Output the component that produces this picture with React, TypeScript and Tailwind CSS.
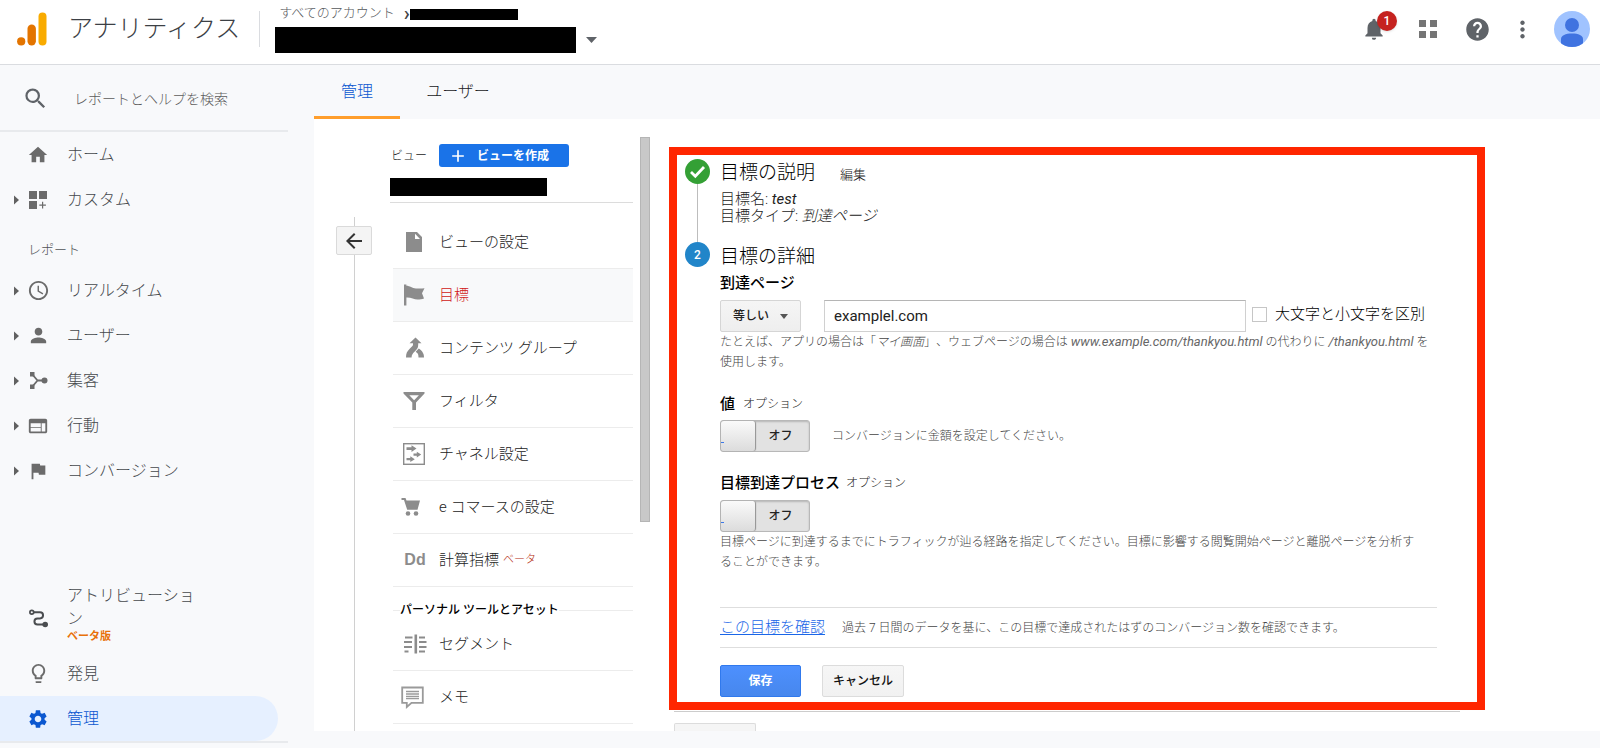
import React, { useState } from "react";
import {
  MdNotifications,
  MdHelp,
  MdMoreVert,
  MdSearch,
  MdHome,
  MdAccessTime,
  MdPerson,
  MdWeb,
  MdFlag,
  MdLightbulbOutline,
  MdSettings,
  MdArrowBack,
  MdAdd,
} from "react-icons/md";

const AnalyticsLogo = () => (
  <svg className="h-[34px] w-[30px] shrink-0" viewBox="0 0 30 34" aria-hidden="true">
    <rect x="21.5" y="0.5" width="8" height="33" rx="4" fill="#f9ab00" />
    <rect x="10.5" y="12.5" width="8.4" height="21" rx="4.2" fill="#e37400" />
    <circle cx="4.2" cy="29.4" r="4.1" fill="#e37400" />
  </svg>
);

const AppsIcon = () => (
  <svg className="size-[18px]" viewBox="0 0 18 18" fill="#757575" aria-hidden="true">
    <path d="M0 0h7v7H0zM11 0h7v7h-7zM0 11h7v7H0zM11 11h7v7h-7z" />
  </svg>
);

const Avatar = () => (
  <svg className="size-9" viewBox="0 0 36 36" aria-hidden="true">
    <clipPath id="avatar-clip">
      <circle cx="18" cy="18" r="18" />
    </clipPath>
    <circle cx="18" cy="18" r="18" fill="#a0c3ff" />
    <g clipPath="url(#avatar-clip)" fill="#4073e0">
      <circle cx="18" cy="14" r="7" />
      <path d="M7 36V28c0-3.500 4.500-5.500 11-5.500S29 24.500 29 28v8z" />
    </g>
  </svg>
);

const CheckIcon = () => (
  <svg className="size-[17px]" viewBox="0 0 17 17" fill="none" aria-hidden="true">
    <path d="M2 9l4.300 4.200L15 4" stroke="#fff" strokeWidth="2.800" />
  </svg>
);

const CustomIcon = () => (
  <svg className="size-[18px]" viewBox="0 0 18 18" fill="currentColor" aria-hidden="true">
    <path d="M0 0h8v8H0zM10 0h8v8h-8zM0 10h8v8H0zM13 10.800h1.200v2.700h2.700v1.200h-2.700v2.700H13v-2.700h-2.700v-1.200H13z" />
  </svg>
);

const AcquisitionIcon = () => (
  <svg className="size-[19px]" viewBox="0 0 19 19" aria-hidden="true">
    <path d="M3 3l5.500 6.500L3 16M8.500 9.500H15" fill="none" stroke="currentColor" strokeWidth="1.800" />
    <path d="M1 1h4.500v4.500H1zM1 13.500h4.500V18H1z" fill="currentColor" />
    <circle cx="15.500" cy="9.500" r="3" fill="currentColor" />
  </svg>
);

const AttributionIcon = () => (
  <svg className="size-[19px]" viewBox="0 0 19 19" aria-hidden="true">
    <circle cx="2.800" cy="3.300" r="1.900" fill="none" stroke="currentColor" strokeWidth="1.700" />
    <path
      d="M4.700 3.300H11a3 3 0 0 1 0 6.100H8.500a3 3 0 0 0 0 6.100H16"
      fill="none"
      stroke="currentColor"
      strokeWidth="2"
    />
    <circle cx="16.200" cy="15.500" r="2.800" fill="currentColor" />
  </svg>
);

const FileIcon = () => (
  <svg className="size-[22px]" viewBox="0 0 22 22" fill="#8c8c8c" aria-hidden="true">
    <path fillRule="evenodd" d="M3 1h11l5 5v15H3zM12 2.800V8h5z" />
  </svg>
);

const GoalIcon = () => (
  <svg className="size-[22px]" viewBox="0 0 22 22" fill="#8c8c8c" aria-hidden="true">
    <path d="M1 0.500h2.400v1.300C7 1.800 9 4.500 13 4.500c3 0 5 0 8.500-.3l-2.500 5 2 5.300c-2 .7-4 1-6.500 1-3.500 0-6.500-2.300-11.100-2V21.500H1z" />
  </svg>
);

const MergeIcon = () => (
  <svg className="size-[22px]" viewBox="0 0 22 22" fill="#8c8c8c" aria-hidden="true">
    <path d="M12.500 0.500l6 5.800h-3.300v1.700c0 3.400-1.600 4.600-3.700 6.700-1.900 1.900-2.900 3.300-2.900 5.800H3c0-4 1-6.200 3.700-8.800C9 9.600 10 8.800 10 7.500V6.300H6.500z" />
    <path d="M15.800 11.500c3.900 3 5.200 5 5.200 9h-5.500c0-3-.3-4-2.800-5.800z" />
  </svg>
);

const FilterIcon = () => (
  <svg className="size-[22px]" viewBox="0 0 22 22" fill="#8c8c8c" aria-hidden="true">
    <path fillRule="evenodd" d="M0.500 2h21v1.500L13 12.500V20H9.300v-7.500L0.500 3.500zM6.300 5.300l4.800 5L15.900 5.300z" />
  </svg>
);

const ChannelIcon = () => (
  <svg className="size-[22px]" viewBox="0 0 22 22" aria-hidden="true">
    <rect x="0.700" y="0.700" width="20.600" height="20.600" fill="#fff" stroke="#8c8c8c" strokeWidth="1.400" />
    <path
      d="M3.500 4.200H8.500V2.300l5 3.300-5 3.300V7h-5zM10.500 10.500h3.300V8.700l4.400 2.900-4.400 2.900v-1.800h-3.300zM3.500 15.100h3.800v-1.800l4.500 2.900-4.500 2.900v-1.800H3.500z"
      fill="#8c8c8c"
    />
  </svg>
);

const CartIcon = () => (
  <svg className="-ml-[6px] size-[20px]" viewBox="0 0 20 20" fill="#8c8c8c" aria-hidden="true">
    <path d="M0.500 1h4l1 2.500H19l-2.500 9.300H6.200L3 3H0.500z" />
    <circle cx="7" cy="16.500" r="2.300" />
    <circle cx="15" cy="16.500" r="2.300" />
  </svg>
);

const SegmentIcon = () => (
  <svg className="ml-[2px] size-[23px]" viewBox="0 0 23 23" fill="#8c8c8c" aria-hidden="true">
    <path d="M10.500 1.500h2.600v19h-2.600zM1 3.500h7.500v2H1zM0 8h8v2H0zM0 13h8v2H0zM0.500 17.500h4v2h-4zM15 3.500h6v2h-6zM15 8h7.500v2H15zM15 13h7.500v2H15zM15 17.500h6v2h-6z" />
  </svg>
);

const MemoIcon = () => (
  <svg className="-ml-1 size-[23px]" viewBox="0 0 23 23" aria-hidden="true">
    <path d="M1.200 1.500h20.600v15.300H10.500L5.800 21v-4.200H1.200z" fill="none" stroke="#9a9a9a" strokeWidth="1.800" />
    <path d="M5 5.500h13M5 8h13M5 10.500h13M5 12.700h13" stroke="#9a9a9a" strokeWidth="1.300" />
  </svg>
);

type NavRowProps = {
  icon: React.ReactNode;
  label: string;
  arrow?: boolean;
  active?: boolean;
};

function NavRow({ icon, label, arrow, active }: NavRowProps) {
  return (
    <a
      href="#"
      className={
        active
          ? "mr-[10px] flex h-[45px] items-center rounded-r-full bg-[#e6f0ff] pl-[14px] text-[#0b57d0]"
          : "flex h-[45px] items-center pl-[14px] text-[#45484c]"
      }
    >
      <svg className="h-[10px] w-[5px] shrink-0" viewBox="0 0 5 10" aria-hidden="true">
        {arrow && <path d="M0 0.500l5 4.500-5 4.500z" fill="#616161" />}
      </svg>
      <span className={active ? "ml-[7px] flex w-6 justify-center" : "ml-[7px] flex w-6 justify-center text-[#6b6b6b]"}>
        {icon}
      </span>
      <span className="ml-[17px] text-base">{label}</span>
    </a>
  );
}

type MenuRowProps = {
  icon: React.ReactNode;
  label: string;
  beta?: boolean;
  selected?: boolean;
};

function MenuRow({ icon, label, beta, selected }: MenuRowProps) {
  return (
    <li className="ml-[3px]">
      <a
        href="#"
        className={
          selected
            ? "flex h-[53px] items-center border-b border-[#ececec] bg-[#f8f9fa] text-[15px] text-[#d01616]"
            : "flex h-[53px] items-center border-b border-[#ececec] text-[15px] text-[#222]"
        }
      >
        <span className="flex w-[42px] shrink-0 justify-center">{icon}</span>
        <span className="ml-1">{label}</span>
        {beta && <span className="ml-1 text-[11px] text-[#b52d10]">ベータ</span>}
      </a>
    </li>
  );
}

function Toggle({ label }: { label: string }) {
  const [on, setOn] = useState(false);
  return (
    <button
      type="button"
      role="switch"
      aria-checked={on}
      aria-label={label}
      onClick={() => setOn(!on)}
      className={
        on
          ? "relative flex h-8 w-[90px] shrink-0 flex-row-reverse rounded-[3px] border border-[#b0b0b0] bg-[#4d90fe]"
          : "relative flex h-8 w-[90px] shrink-0 rounded-[3px] border border-[#b8b8b8] bg-[#e2e2e2] shadow-[inset_0_1px_2px_rgba(0,0,0,0.2)]"
      }
    >
      <span className="h-full w-[35px] rounded-[3px] border-r border-[#999] bg-linear-to-b from-[#fafafa] to-[#dcdcdc] shadow-[0_0_1px_#888]" />
      <span className="flex h-full flex-1 items-center justify-center pr-1 text-xs font-medium text-[#222]">
        {on ? "オン" : "オフ"}
      </span>
      <span className="absolute bottom-2 left-0 h-px w-[3px] bg-[#3b78e7]" />
    </button>
  );
}

function Header() {
  return (
    <header className="flex h-[65px] shrink-0 items-center border-b border-[#dadce0] bg-white pr-[10px] pb-[6px] pl-[17px]">
      <AnalyticsLogo />
      <h1 className="ml-[21px] text-[25px] font-light text-[#3c4045]">アナリティクス</h1>
      <div className="ml-[19px] h-9 w-px bg-[#dadce0]" />
      <div className="ml-[15px] flex flex-col gap-1 pb-[2px]">
        <div className="flex h-5 items-center pl-1 text-[13px] text-[#55585c]">
          <span className="font-light">すべてのアカウント</span>
          <span className="ml-[9px] text-xl leading-5 font-medium text-[#444]">›</span>
          <span className="mt-[2px] h-[11px] w-[108px] bg-black" />
        </div>
        <button type="button" aria-label="アカウントを選択" className="flex items-center gap-[10px]">
          <span className="h-[26px] w-[301px] bg-black" />
          <svg className="h-[6px] w-[11px]" viewBox="0 0 11 6" aria-hidden="true">
            <path d="M0 0h11L5.500 6z" fill="#5f6368" />
          </svg>
        </button>
      </div>
      <div className="ml-auto flex items-center text-[#5f6368]">
        <button type="button" aria-label="通知" className="relative">
          <MdNotifications className="size-[26px]" />
          <span className="absolute -top-[5px] left-[16px] flex size-5 items-center justify-center rounded-full bg-[#c5221f] text-xs font-medium text-white shadow">
            1
          </span>
        </button>
        <button type="button" aria-label="アプリ" className="ml-8">
          <AppsIcon />
        </button>
        <button type="button" aria-label="ヘルプ" className="ml-[27px]">
          <MdHelp className="size-[27px]" />
        </button>
        <button type="button" aria-label="メニュー" className="ml-[18px]">
          <MdMoreVert className="size-[27px]" />
        </button>
        <button type="button" aria-label="プロフィール" className="ml-[18px]">
          <Avatar />
        </button>
      </div>
    </header>
  );
}

function Sidebar() {
  return (
    <nav className="flex w-[288px] shrink-0 flex-col pb-[5px] font-light">
      <label className="flex h-[67px] items-center border-b-2 border-[#e8eaed] pt-[2px] pl-[22px]">
        <MdSearch className="size-[27px] text-[#5f6368]" />
        <input
          type="text"
          aria-label="検索"
          placeholder="レポートとヘルプを検索"
          className="ml-[25px] w-[200px] bg-transparent text-sm font-light text-[#444] outline-none placeholder:text-[#5c5c5c]"
        />
      </label>
      <NavRow icon={<MdHome className="size-[22px]" />} label="ホーム" />
      <NavRow icon={<CustomIcon />} label="カスタム" arrow />
      <h2 className="flex h-[46px] items-center pt-[10px] pl-7 text-[13px] text-[#505357]">レポート</h2>
      <NavRow icon={<MdAccessTime className="size-[23px]" />} label="リアルタイム" arrow />
      <NavRow icon={<MdPerson className="size-[23px]" />} label="ユーザー" arrow />
      <NavRow icon={<AcquisitionIcon />} label="集客" arrow />
      <NavRow icon={<MdWeb className="size-[22px]" />} label="行動" arrow />
      <NavRow icon={<MdFlag className="size-[22px]" />} label="コンバージョン" arrow />
      <div className="flex-1" />
      <a href="#" className="flex items-center pb-[7px] pl-[26px] text-[#45484c]">
        <span className="mt-2 flex w-6 justify-center text-[#4a4d50]">
          <AttributionIcon />
        </span>
        <span className="ml-[17px] w-[130px] text-base leading-[23px]">
          アトリビューション
          <span className="block text-[11px] leading-[14px] font-bold text-[#e8710a]">ベータ版</span>
        </span>
      </a>
      <NavRow icon={<MdLightbulbOutline className="size-[23px]" />} label="発見" />
      <NavRow icon={<MdSettings className="size-[22px]" />} label="管理" active />
      <div className="h-[2px] bg-[#e8eaed]" />
    </nav>
  );
}

function ViewColumn() {
  return (
    <section className="w-[243px] shrink-0">
      <div className="flex items-center pt-[25px]">
        <h2 className="w-[49px] pl-px text-xs font-light text-[#222]">ビュー</h2>
        <button
          type="button"
          className="flex h-[23px] w-[130px] items-center rounded-[3px] bg-[#1a73e8] pl-[9px] text-xs font-bold text-white"
        >
          <MdAdd className="size-5" />
          <span className="ml-[9px]">ビューを作成</span>
        </button>
      </div>
      <div className="mt-[11px] h-[18px] w-[157px] bg-black" />
      <div className="mt-[6px] border-b border-[#dcdcdc]" />
      <ul className="mt-[13px] font-light">
        <MenuRow icon={<FileIcon />} label="ビューの設定" />
        <MenuRow icon={<GoalIcon />} label="目標" selected />
        <MenuRow icon={<MergeIcon />} label="コンテンツ グループ" />
        <MenuRow icon={<FilterIcon />} label="フィルタ" />
        <MenuRow icon={<ChannelIcon />} label="チャネル設定" />
        <MenuRow icon={<CartIcon />} label="e コマースの設定" />
        <MenuRow
          icon={<span className="ml-[2px] font-['Liberation_Sans',sans-serif] text-base font-bold text-[#8c8c8c]">Dd</span>}
          label="計算指標"
          beta
        />
      </ul>
      <div className="ml-[3px] flex items-center pt-[15px]">
        <div className="w-[7px] border-t border-[#ececec]" />
        <h3 className="text-xs leading-4 font-medium whitespace-nowrap text-black">パーソナル ツールとアセット</h3>
        <div className="flex-1 border-t border-[#ececec]" />
      </div>
      <ul className="font-light">
        <MenuRow icon={<SegmentIcon />} label="セグメント" />
        <MenuRow icon={<MemoIcon />} label="メモ" />
      </ul>
    </section>
  );
}

function GoalForm() {
  return (
    <form
      className="border-8 border-[#ff2600] pt-1 pr-10 pb-[5px] pl-2 text-[#222] [text-spacing-trim:space-all]"
      onSubmit={(event) => event.preventDefault()}
    >
      <section className="flex">
        <div className="flex w-[25px] shrink-0 flex-col items-center">
          <span className="flex size-[25px] items-center justify-center rounded-full bg-[#34a035]">
            <CheckIcon />
          </span>
          <span className="w-px flex-1 bg-[#bdbdbd]" />
        </div>
        <div className="ml-[10px] flex-1 pb-[17px] font-light">
          <div className="flex h-[26px] items-center pt-[2px]">
            <h2 className="text-[19px] text-black">目標の説明</h2>
            <a href="#" className="ml-[25px] pt-1 text-[13px] text-[#222]">
              編集
            </a>
          </div>
          <div className="mt-[6px] text-[15px] leading-[17px] text-[#222]">
            <p>
              目標名: <em className="font-normal">test</em>
            </p>
            <p>
              目標タイプ: <em>到達ページ</em>
            </p>
          </div>
        </div>
      </section>
      <section className="flex">
        <div className="w-[25px] shrink-0">
          <span className="flex size-[25px] items-center justify-center rounded-full bg-[#2185c9] text-xs font-medium text-white">
            2
          </span>
        </div>
        <div className="ml-[10px] min-w-0 flex-1">
          <h2 className="text-[19px] leading-[30px] font-light text-black">目標の詳細</h2>
          <h3 className="pt-[2px] text-[15px] leading-[18px] font-medium text-black">到達ページ</h3>
          <div className="mt-2 flex items-center">
            <div className="relative shrink-0">
              <select
                aria-label="一致条件"
                className="h-8 w-[81px] appearance-none rounded-[2px] border border-[#d5d5d5] bg-linear-to-b from-[#f5f5f5] to-[#eeeeee] pl-3 text-xs font-medium text-[#222]"
              >
                <option>等しい</option>
                <option>先頭が一致</option>
                <option>正規表現</option>
              </select>
              <svg
                className="pointer-events-none absolute top-[14px] right-[13px] h-[5px] w-2"
                viewBox="0 0 8 5"
                aria-hidden="true"
              >
                <path d="M0 0h8L4 5z" fill="#555" />
              </svg>
            </div>
            <input
              type="text"
              aria-label="到達ページ"
              defaultValue="examplel.com"
              className="ml-[23px] h-8 min-w-0 flex-1 border border-[#d0d0d0] border-t-[#b5b5b5] bg-white px-[9px] text-[15px] text-[#222] outline-none"
            />
            <label className="mr-3 ml-[6px] flex shrink-0 items-center pb-1 text-[15px] font-light text-black">
              <input type="checkbox" className="mr-2 size-[15px] appearance-none border border-[#c6c6c6] bg-white checked:bg-[#4d90fe]" />
              大文字と小文字を区別
            </label>
          </div>
          <p className="text-xs leading-5 font-light text-[#444]">
            たとえば、アプリの場合は「<em>マイ画面</em>」、ウェブページの場合は{" "}
            <em className="text-[13px] font-normal text-[#666]">www.example.com/thankyou.html</em> の代わりに{" "}
            <em className="text-[13px] font-normal text-[#666]">/thankyou.html</em> を
            <br />
            使用します。
          </p>
          <h3 className="mt-[22px] flex items-center text-[15px] leading-5 font-medium text-black">
            値<span className="ml-2 text-xs font-light text-[#222]">オプション</span>
          </h3>
          <div className="mt-[6px] flex items-center">
            <Toggle label="値" />
            <p className="ml-[22px] text-xs font-light text-[#444]">コンバージョンに金額を設定してください。</p>
          </div>
          <h3 className="mt-[21px] flex items-center text-[15px] leading-5 font-medium text-black">
            目標到達プロセス<span className="ml-[6px] text-xs font-light text-[#222]">オプション</span>
          </h3>
          <div className="mt-[7px]">
            <Toggle label="目標到達プロセス" />
          </div>
          <p className="pr-4 text-xs leading-5 font-light text-[#444]">
            目標ページに到達するまでにトラフィックが辿る経路を指定してください。目標に影響する閲覧開始ページと離脱ページを分析することができます。
          </p>
          <div className="mt-[35px] flex h-[41px] items-center border-y border-[#dedede] font-light">
            <a href="#" className="text-[15px] text-[#1a66e8] underline underline-offset-2">
              この目標を確認
            </a>
            <p className="ml-[17px] text-xs text-[#444]">
              過去 7 日間のデータを基に、この目標で達成されたはずのコンバージョン数を確認できます。
            </p>
          </div>
          <div className="mt-[17px] flex gap-[21px] text-xs font-medium">
            <button
              type="submit"
              className="h-8 w-[81px] rounded-[2px] border border-[#3079ed] bg-linear-to-b from-[#4d90fe] to-[#4787ed] font-bold text-white"
            >
              保存
            </button>
            <button
              type="button"
              className="h-8 w-[82px] rounded-[2px] border border-[#dcdcdc] bg-linear-to-b from-[#f6f6f6] to-[#f1f1f1] text-[#111]"
            >
              キャンセル
            </button>
          </div>
        </div>
      </section>
    </form>
  );
}

export default function App() {
  return (
    <div className="flex min-h-screen flex-col bg-[#f8f9fb] font-[Roboto,'Noto_Sans_CJK_JP',sans-serif]" lang="ja">
      <Header />
      <div className="flex flex-1">
        <Sidebar />
        <main className="ml-[26px] flex min-w-0 flex-1 flex-col pb-[17px]">
          <div className="flex h-[54px] shrink-0 font-light">
            <a
              href="#"
              className="flex w-[86px] items-center justify-center border-b-[3px] border-[#ff9e2c] pt-[2px] text-base text-[#0b57d0]"
            >
              管理
            </a>
            <a
              href="#"
              className="flex w-[116px] items-center justify-center border-b-[3px] border-transparent pt-[2px] text-base text-[#202124]"
            >
              ユーザー
            </a>
          </div>
          <div className="flex flex-1 bg-white pl-[22px]">
            <div className="flex w-9 shrink-0 flex-col items-center pt-[98px]">
              <span className="h-[9px] w-px bg-[#d0d0d0]" />
              <button
                type="button"
                aria-label="戻る"
                className="flex h-[29px] w-9 shrink-0 items-center justify-center rounded-[2px] border border-[#dadada] bg-[#f4f4f4] text-[#333]"
              >
                <MdArrowBack className="size-6" />
              </button>
              <span className="w-px flex-1 bg-[#d0d0d0]" />
            </div>
            <div className="w-[18px] shrink-0" />
            <ViewColumn />
            <div className="ml-[7px] pt-[18px]">
              <div className="h-[385px] w-[10px] border border-[#b5b5b5] bg-[#c8c8c8]" />
            </div>
            <div className="ml-[19px] flex min-w-0 flex-1 flex-col pt-[28px] pr-[115px]">
              <GoalForm />
              <div className="mt-px mr-[25px] ml-[5px] border-t border-[#ccc]" />
              <div className="mt-[11px] ml-[5px] h-2 w-[82px] rounded-t-[2px] border border-b-0 border-[#dcdcdc] bg-[#f5f5f5]" />
            </div>
          </div>
        </main>
      </div>
    </div>
  );
}
